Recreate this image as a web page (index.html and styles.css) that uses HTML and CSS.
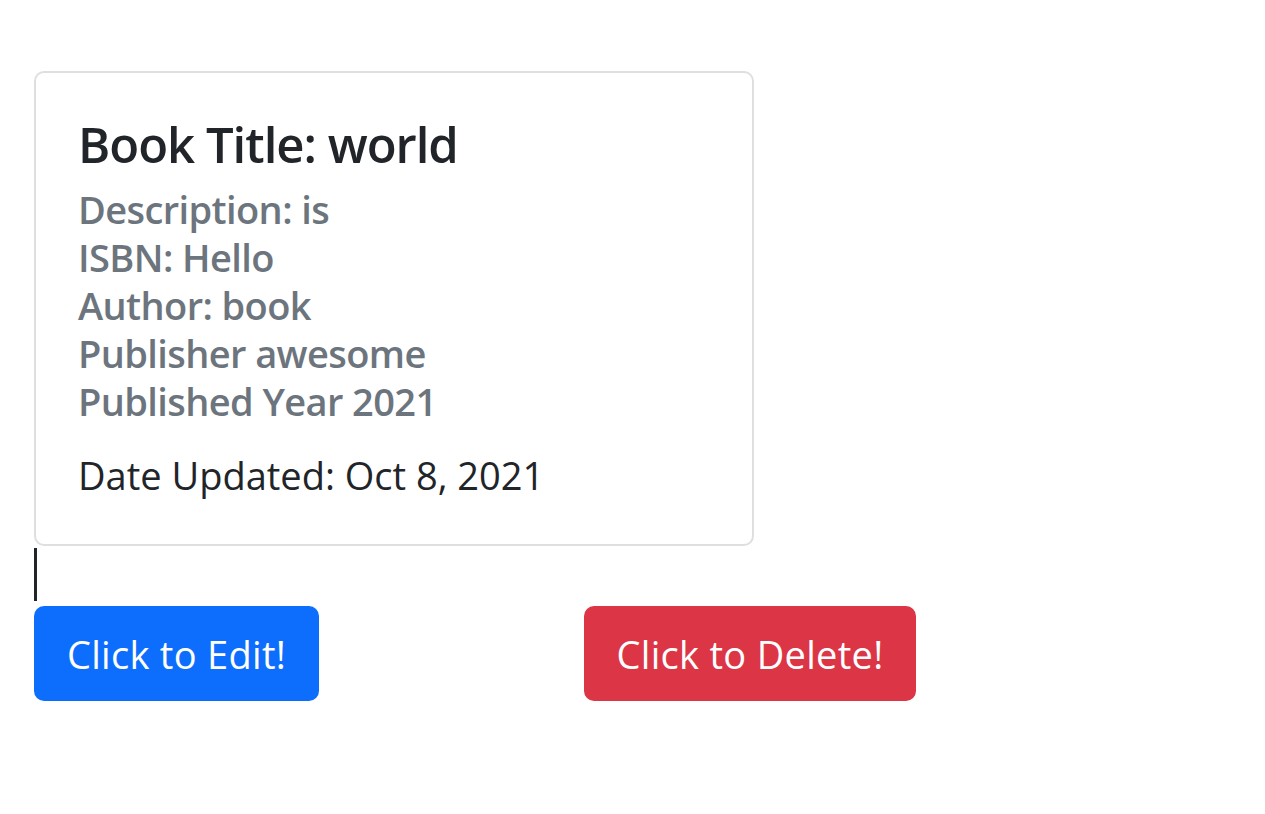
FILE: index.html
```html
<!DOCTYPE html>
<html lang="en">
<head>
<meta charset="utf-8">
<title>Book Details</title>
<link rel="stylesheet" href="styles.css">
</head>
<body>
<main class="page">
  <div class="card">
    <h3 class="card-title">Book Title: world</h3>
    <h5 class="card-subtitle">
      Description: is<br>
      ISBN: Hello<br>
      Author: book<br>
      Publisher awesome<br>
      Published Year 2021
    </h5>
    <p class="card-text">Date Updated: Oct 8, 2021</p>
  </div>
  <div class="caret"></div>
  <div class="actions">
    <button class="btn btn-edit">Click to Edit!</button>
    <button class="btn btn-delete">Click to Delete!</button>
  </div>
</main>
</body>
</html>
```
FILE: styles.css
```css
* { box-sizing: border-box; }
html, body { margin: 0; padding: 0; background: #fff; }
body {
  font-family: "Open Sans", "Noto Sans", "Liberation Sans", sans-serif;
  color: #212529;
}
.page {
  padding: 71px 0 0 34px;
}
.card {
  width: 720px;
  height: 475px;
  border: 2px solid #dfdfdf;
  border-radius: 10px;
  padding: 42px 40px 0 42px;
}
.card-title {
  margin: 0;
  font-size: 49px;
  line-height: 59px;
  font-weight: 600;
  color: #212529;
  letter-spacing: -1px;
}
.card-subtitle {
  margin: 11px 0 0 0;
  font-size: 38px;
  line-height: 48px;
  font-weight: 600;
  color: #6c757d;
  letter-spacing: -0.6px;
}
.card-text {
  margin: 20px 0 0 0;
  font-size: 38px;
  line-height: 60px;
  font-weight: 400;
  color: #212529;
  letter-spacing: 0;
}
.caret {
  width: 3px;
  height: 53px;
  margin-top: 2px;
  background: #212529;
}
.actions {
  display: flex;
  gap: 265px;
  margin-top: 5px;
}
.btn {
  height: 95px;
  border: 0;
  border-radius: 10px;
  color: #fff;
  font-family: "Open Sans", "Noto Sans", "Liberation Sans", sans-serif;
  font-size: 38px;
  font-weight: 400;
  letter-spacing: 0.3px;
  padding: 0;
  text-align: center;
}
.btn-edit { width: 285px; background: #0d6efd; }
.btn-delete { width: 332px; background: #dc3545; }
```
